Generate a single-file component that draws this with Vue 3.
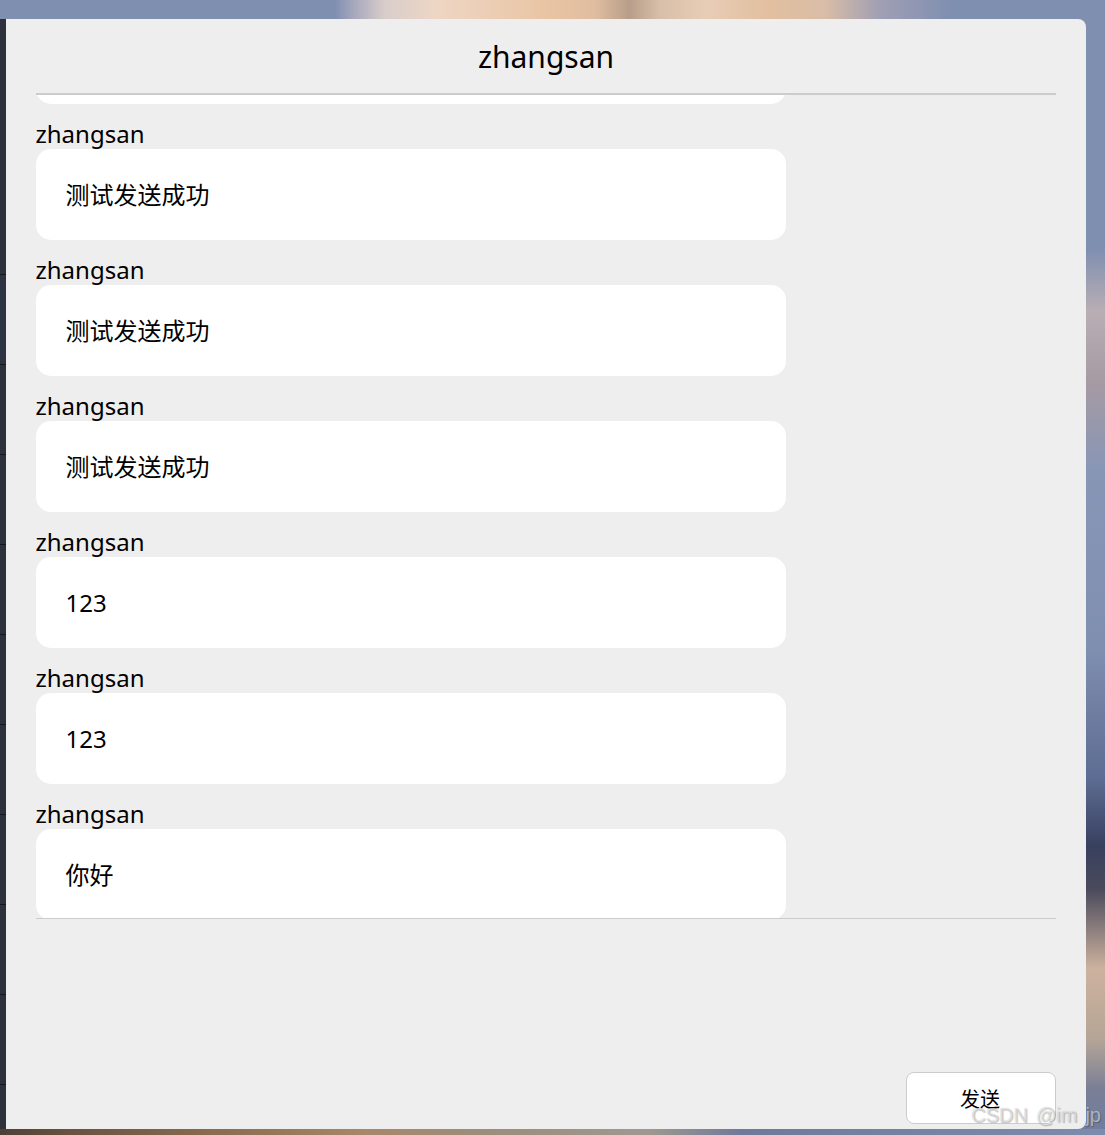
<script setup>
const messages = [
  { id: 1, name: 'zhangsan', text: '测试发送成功' },
  { id: 2, name: 'zhangsan', text: '测试发送成功' },
  { id: 3, name: 'zhangsan', text: '测试发送成功' },
  { id: 4, name: 'zhangsan', text: '测试发送成功' },
  { id: 5, name: 'zhangsan', text: '123' },
  { id: 6, name: 'zhangsan', text: '123' },
  { id: 7, name: 'zhangsan', text: '你好' },
];
</script>

<template>
  <div class="page">
    <div class="top-strip"></div>
    <div class="middle">
      <div class="left-strip"></div>
      <div class="dialog">
        <div class="title">zhangsan</div>
        <div class="list">
          <div v-for="m in messages" :key="m.id" class="message">
            <div class="name">{{ m.name }}</div>
            <div class="bubble">{{ m.text }}</div>
          </div>
        </div>
        <div class="editor"></div>
        <div class="actions">
          <button class="send">发送</button>
        </div>
      </div>
    </div>
    <div class="bottom-strip"></div>
    <div class="watermark">CSDN @im jp</div>
  </div>
</template>

<style scoped>
.page {
  position: relative;
  width: 1105px;
  height: 1135px;
  overflow: hidden;
  display: flex;
  flex-direction: column;
  font-family: "Noto Sans", "Noto Sans CJK SC", sans-serif;
  color: #000;
}

.top-strip {
  height: 19px;
  background: linear-gradient(90deg, #7f8fb0 0, #7f8fb0 335px, #a3a6bb 352px, #d9cdcb 385px, #eed6c4 437px, #e9c4a3 550px, #dfbd9f 595px, #b89e8a 629px, #d8bfa9 660px, #e8cdb6 705px, #e2bf9f 768px, #d9bda7 825px, #a09fb4 880px, #7f8fb0 951px, #7f8fb0 100%);
}

.middle {
  flex: 1;
  min-height: 0;
  display: flex;
  background: linear-gradient(180deg, #7f8fb0 0, #7f8fb0 230px, #b8aeb4 292px, #a59aa3 365px, #8896b6 451px, #7f8fb0 630px, #5d6c92 760px, #38405f 827px, #4a4a5c 870px, #cdb29e 950px, #b5a596 1020px, #7a7f96 1070px, #717d9f 100%);
}

.left-strip {
  width: 6px;
  background-color: #2d313c;
  background-image:
    repeating-linear-gradient(180deg, #15171c 0, #15171c 1px, transparent 1px, transparent 90px),
    linear-gradient(#2c3444, #2c3444);
  background-repeat: no-repeat;
  background-position: 0 255px, 0 255px;
  background-size: 6px 900px, 6px 90px;
}

.dialog {
  width: 1080px;
  display: flex;
  flex-direction: column;
  padding: 0 30px 5px;
  box-sizing: border-box;
  background: #eee;
  border-radius: 0 8px 8px 0;
}

.title {
  flex: none;
  height: 74px;
  line-height: 76px;
  font-size: 30px;
  text-align: center;
  border-bottom: 2px solid #ccc;
}

.list {
  flex: none;
  height: 823px;
  overflow: hidden;
  display: flex;
  flex-direction: column;
  justify-content: flex-end;
  border-bottom: 1px solid #ccc;
}

.message {
  flex: none;
  margin-top: 15px;
}

.message:last-child {
  margin-bottom: -2px;
}

.name {
  line-height: 30px;
  margin-left: -0.5px;
  font-size: 24px;
}

.bubble {
  width: 750px;
  height: 91px;
  line-height: 91px;
  padding: 0 30px 0 29.5px;
  box-sizing: border-box;
  font-size: 24px;
  background: #fff;
  border-radius: 15px;
}

.editor {
  flex: 1;
}

.actions {
  flex: none;
  display: flex;
  justify-content: flex-end;
}

.send {
  width: 150px;
  height: 52px;
  padding: 0 2px 0 0;
  font-family: inherit;
  font-size: 20px;
  color: #000;
  background: #fff;
  border: 1px solid #ccc;
  border-radius: 8px;
}

.bottom-strip {
  height: 6px;
  background: linear-gradient(90deg, #4f4038 0, #6a5140 70px, #8a6a50 210px, #a8876b 366px, #9c8d7c 493px, #a09890 648px, #6f7a9a 740px, #7d8bac 100%);
}

.watermark {
  position: absolute;
  right: 4px;
  bottom: 8px;
  font-family: "Liberation Sans", sans-serif;
  font-size: 20px;
  word-spacing: 2.5px;
  color: rgba(255, 255, 255, 0.55);
  text-shadow: 1px 1px 1px rgba(0, 0, 0, 0.22), 0 0 1px rgba(0, 0, 0, 0.22);
}
</style>
